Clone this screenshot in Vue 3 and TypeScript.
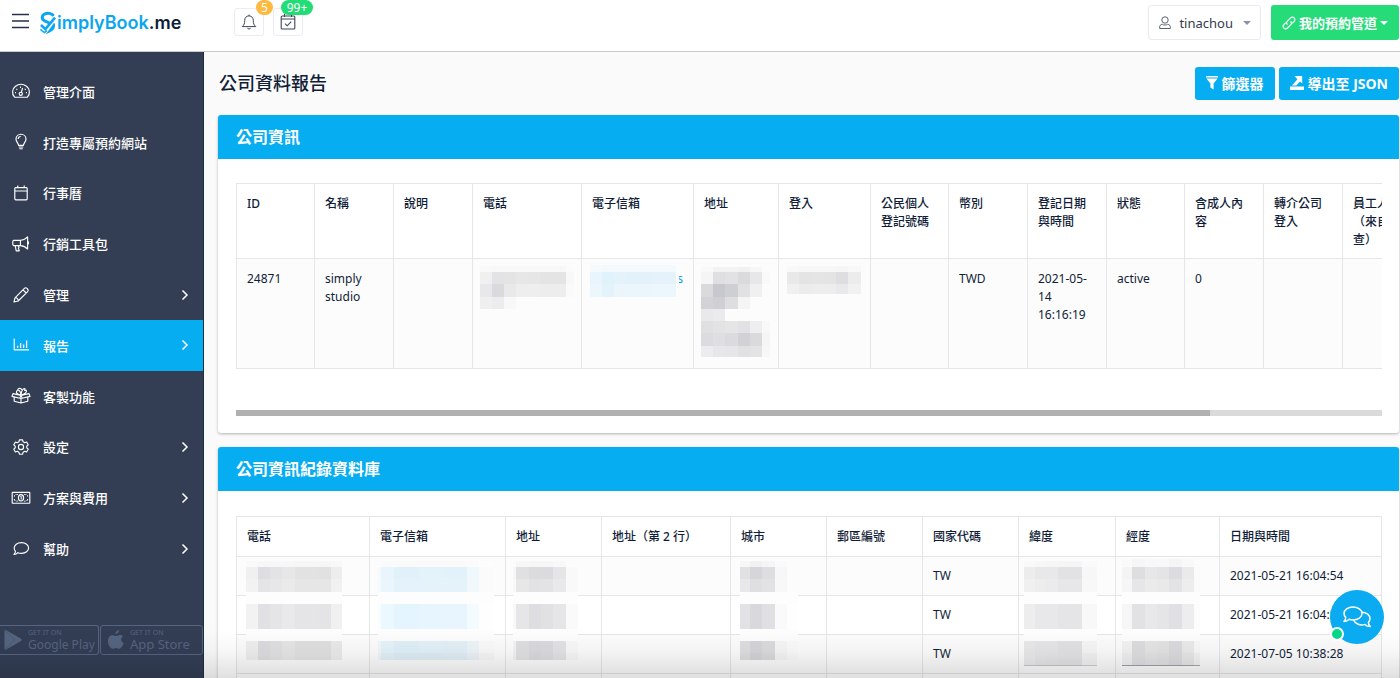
<script setup lang="ts">
import { computed, ref } from 'vue'

interface Mosaic {
  xs: number[]
  ys: number[]
  fills: string[]
}
interface Rect {
  x: number
  y: number
  w: number
  h: number
  fill: string
}
interface MenuItem {
  label: string
  icon: string
  more?: boolean
}

const menu: MenuItem[] = [
  { label: '管理介面', icon: 'gauge' },
  { label: '打造專屬預約網站', icon: 'bulb' },
  { label: '行事曆', icon: 'calendar' },
  { label: '行銷工具包', icon: 'horn' },
  { label: '管理', icon: 'pencil', more: true },
  { label: '報告', icon: 'chart', more: true },
  { label: '客製功能', icon: 'gift' },
  { label: '設定', icon: 'gear', more: true },
  { label: '方案與費用', icon: 'cash', more: true },
  { label: '幫助', icon: 'bubble', more: true },
]
const active = ref('報告')

const companyCols = [78, 79, 79, 109, 112, 85, 92, 78, 79, 79, 78, 79, 79, 79]
const companyHeads = ['ID', '名稱', '說明', '電話', '電子信箱', '地址', '登入', '公民個人登記號碼', '幣別', '登記日期與時間', '狀態', '含成人內容', '轉介公司登入', '員工人數（來自調查）']
const companyRow = ['24871', 'simply studio', '', '', '', '', '', '', 'TWD', '2021-05-14 16:16:19', 'active', '0', '', '']
const companyWidth = computed(() => companyCols.reduce((a, b) => a + b, 0))

const logCols = [133, 136, 96, 129, 96, 96, 96, 97, 104, 162]
const logHeads = ['電話', '電子信箱', '地址', '地址（第 2 行）', '城市', '郵區編號', '國家代碼', '緯度', '經度', '日期與時間']
const logRows = ['2021-05-21 16:04:54', '2021-05-21 16:04:54', '2021-07-05 10:38:28', '']

function rects(m: Mosaic): Rect[] {
  const out: Rect[] = []
  m.fills.forEach((line, r) => {
    line.split(' ').forEach((code, c) => {
      const fill = '#' + (code.length === 2 ? code + code + code : code)
      out.push({ x: m.xs[c], y: m.ys[r], w: m.xs[c + 1] - m.xs[c], h: m.ys[r + 1] - m.ys[r], fill })
    })
  })
  return out
}

// Pixelated covers for private values, keyed by column index; units are pixels from the cell corner.
const companyMasks: Record<number, Rect[]> = {
  3: rects({
    xs: [8, 20, 32, 44, 56, 68, 94, 102],
    ys: [8, 14, 26, 39, 51],
    fills: ['f9 f8 f8 f8 f8 f8 fb', 'f0f0f1 e3e3e5 e4 e7e7e8 e6 e4 f8', 'e8e8ea dadade e9 ee ee ed fa', 'efeff0 ececee f8'],
  }),
  4: rects({
    xs: [9, 21, 33, 45, 70, 95],
    ys: [7, 14, 26, 39],
    fills: ['f5fafd f3f9fc f3f9fc f3f9fc f3f9fc', 'e8f5fc e0f2fb e4f3fa e3f2fa e5f2fb', 'ebf6fd e4f2fc ecf5fc eaf5fc ecf6fd'],
  }),
  5: rects({
    xs: [8, 20, 32, 45, 57, 69, 77],
    ys: [9, 14, 26, 39, 51, 63, 75, 88, 99],
    fills: [
      'f9 f3 f3 f1 f7',
      'f5 dfdfe2 e2e2e4 dadadd e7e7e9 f9',
      'dadadd c7c7cd cecfd3 e1e1e4 f0f0f1',
      'd3d3d7 cfcfd4 dedee1 f5',
      'e9e9ec ebebed fc fc fc fc',
      'e0e0e3 e3e3e5 e5 e2e2e4 eeeef0 f8',
      'dcdce0 dfdfe2 dbdbdf d1d1d6 dadadd f5',
      'ececee e7e7e9 e6e6e8 e1e1e4 e3e3e5 f7',
    ],
  }),
  6: rects({
    xs: [9, 21, 33, 46, 58, 70, 83],
    ys: [8, 14, 26, 36],
    fills: ['f9 f7 f7 f7 f6 f8', 'e9e9ea e4e4e5 e5 e4 dedee0 ececed', 'f0 ececed ed ed e9e9eb f1'],
  }),
}

const bandYs = [6, 12, 24, 37, 49, 74, 86, 98, 105]
const logMasks: Record<number, Rect[]> = {
  0: rects({
    xs: [10, 22, 34, 46, 59, 83, 95, 106],
    ys: bandYs,
    fills: [
      'f9 f7 f7 f7 f6 f6 f8',
      'f0 dedee2 e3e3e5 e7 e2 e1 ed',
      'f2 e4e4e7 e7e7e9 ea e6 e6 f1',
      'fd fd fd fd fd fd fd',
      'f2f2f3 e0e0e5 e5e5e8 e9e9ec e5e5e7 e4e4e6 f0',
      'fd fd fd fd fd fd fd',
      'ee dcdce0 e0e0e2 e5 e0 e0 ea',
      'ee dedee1 e2e2e4 e6 e2 e2 ec',
    ],
  }),
  1: rects({
    xs: [9, 12, 25, 50, 74, 98, 110, 125],
    ys: bandYs,
    fills: [
      'fc fa fa fa fa fb fd',
      'f5fafc e8f5fc e1f1fa e4f2fa e3f1fa eff8fc fb',
      'f5fafc eaf6fc e3f2fb e4f2fa e4f2fa f1f8fc fb',
      'fd fd fd fd fd fd fd',
      'fafdff ebf8ff e4f5ff e7f5ff e8f5fe f3fbff fe',
      'fd fd fd fd fd fd fd',
      'f2f7fa e5f3fa e0f0f9 e3f1f9 e3f0f8 eef5f8 fa',
      'f0f5f8 e3f0f8 deedf7 dfedf6 e1eef6 ebf1f5 f6',
    ],
  }),
  2: rects({
    xs: [8, 11, 24, 36, 48, 61, 73],
    ys: bandYs,
    fills: [
      'fb f7 f6 f6 f8 fc',
      'f6 e0e0e2 dbdbde dbdbdf e5e5e7 f9',
      'f8 e7e7e8 e2e2e4 e3e3e5 e9e9eb f9',
      'fd fd fd fd fd fd',
      'f8 e6e6e9 dedee2 e1e1e4 e6e6e9 fa',
      'fd fd fd fd fd fd',
      'f3 dfdfe1 dadade dbdbdf e3e3e5 f8',
      'f3 e1e1e3 dadadd dcdcdf e2e2e4 f6',
    ],
  }),
  4: rects({
    xs: [10, 20, 32, 45, 57, 68],
    ys: bandYs,
    fills: [
      'f7 f1 f5 fa fc',
      'e1e1e4 d5d5da dedee1 f7 fc',
      'e8e8ea dfdfe2 e2e2e4 f8 fc',
      'fd fd fd fd fd',
      'e2e2e6 d8d8dd e0e0e4 fa fe',
      'fd fd fd fd fd',
      'dedee1 d6d6da dbdbde f6 fa',
      'dddddf d4d4d8 dadadd f4 f9',
    ],
  }),
  7: rects({
    xs: [6, 17, 28, 40, 64, 79],
    ys: [6, 12, 24, 37, 49, 74, 86, 98, 110, 111],
    fills: [
      'f9 f7 f6 f5 fa',
      'ececed e8e8ea e8e8ea e2e2e4 f7',
      'f0 ededee ebebed e7e7e9 f8',
      'fd fd fd fd fd',
      'ededee e8e8ea e8e8eb e5e5e8 f8',
      'fd fd fd fd fd',
      'e9e9ea e6e6e8 e6e6e8 e2e2e5 f6',
      'ea e6e6e8 e5e5e7 e3e3e5 f2',
      'c8c8cb c5c5c8 c5c5c8 c5c5c8 cd',
    ],
  }),
  8: rects({
    xs: [7, 17, 30, 42, 54, 67, 79, 85],
    ys: [4, 12, 24, 37, 49, 74, 86, 98, 110, 111],
    fills: [
      'fa f6 f8 f8 f5 f9 fc',
      'f4 dedee1 e7e7e8 e4e4e6 dcdce0 ea fb',
      'f6 e6e6e8 ebebec e9 e3e3e6 ed fb',
      'fd fd fd fd fd fd fd',
      'f6 e2e2e5 e8e8eb e5e5e8 e0e0e4 ededef fc',
      'fd fd fd fd fd fd fd',
      'f2 dddde0 e5e5e6 e3e3e4 dbdbdf ea f8',
      'f0 dfdfe1 e3e3e5 e1e1e3 dcdcdf e7 f3',
      '9fa0a8 9fa0a8 9fa0a8 9fa0a8 9fa0a8 9fa0a8 a9',
    ],
  }),
}
</script>

<template>
  <div class="app">
    <header class="topbar">
      <button class="burger" type="button" aria-label="選單">
        <svg width="18" height="16" viewBox="0 0 18 16"><path d="M0 1.5h17M0 8h17M0 14.5h17" stroke="#26314a" stroke-width="1.4" /></svg>
      </button>
      <a class="logo" href="#">
        <svg width="17" height="24" viewBox="0 0 17 24" fill="none" stroke="#0aa6f0">
          <path d="M13.6 4.8C11.6 2.2 7.6 1.5 4.6 3C1.4 4.8 1.4 8.4 4.6 9.8L9.4 12" stroke-width="3" />
          <path d="M15 6.6L5.4 18.2L1 14" stroke-width="2.6" />
          <path d="M13.8 12.4C15 16 12.8 19.4 8.4 21.2L13.6 14" stroke-width="1.8" />
          <path d="M.4 18.4L4.4 21.6L7 19.6" stroke-width="1.4" />
        </svg>
        <span class="logo-text">implyBook<b>.me</b></span>
      </a>
      <div class="notices">
        <button class="notice" type="button" aria-label="通知">
          <svg width="16" height="16" viewBox="0 0 16 16" fill="none" stroke="#3e465a" stroke-width="1"><path d="M8 1.9V.6M8 1.9C5.3 1.9 3.7 3.8 3.7 6.5C3.7 9.6 3.2 10.8 1.2 12.6H14.8C12.8 10.8 12.3 9.6 12.3 6.5C12.3 3.8 10.7 1.9 8 1.9ZM6.4 14.2Q8 16 9.6 14.2" /></svg>
          <span class="badge amber">5</span>
        </button>
        <button class="notice" type="button" aria-label="預約">
          <svg width="16" height="16" viewBox="0 0 16 16" fill="none" stroke="#3e465a" stroke-width="1.1"><rect x="1.2" y="2" width="13.6" height="13" rx="1" /><path d="M1.2 5H14.8M4.5 0V3M11.5 0V3M5 9.7L7.2 11.8L11.2 7.7" /></svg>
          <span class="badge green">99+</span>
        </button>
      </div>
      <button class="user" type="button">
        <svg width="14" height="16" viewBox="0 0 14 16" fill="none" stroke="#596174" stroke-width="1"><circle cx="7" cy="5" r="3.2" /><path d="M1.7 13.5C1.2 10.6 2.7 9.3 4.4 9.3C6 10.3 8 10.3 9.6 9.3C11.3 9.3 12.8 10.6 12.3 13.5Z" /></svg>
        <span>tinachou</span>
        <i class="caret"></i>
      </button>
      <button class="channels" type="button">
        <svg width="14" height="14" viewBox="0 0 14 14" fill="none" stroke="#fff" stroke-width="1.2"><path d="M5.4 8.6C4.4 7.5 4.4 6.2 5.4 5.2L8.5 2C9.6 .9 11.1 .9 12.1 1.9C13.1 2.9 13.1 4.4 12 5.5L10.2 7.3" /><path d="M8.6 5.4C9.6 6.5 9.6 7.8 8.6 8.8L5.5 12C4.4 13.1 2.9 13.1 1.9 12.1C.9 11.1 .9 9.6 2 8.5L3.8 6.7" /></svg>
        <span>我的預約管道</span>
        <i class="caret"></i>
      </button>
    </header>

    <div class="body">
      <aside class="sidebar">
        <nav class="menu">
          <a v-for="m in menu" :key="m.label" href="#" class="item" :class="{ on: m.label === active }" @click.prevent="active = m.label">
            <svg class="ico" width="20" height="20" viewBox="0 0 20 20" fill="none" stroke="currentColor" stroke-width="1.15" stroke-linejoin="round">
              <g v-if="m.icon === 'gauge'">
                <path d="M3.6 16.2C.4 12.7 1.2 7.6 4.5 5.2C7.8 2.9 12.2 2.9 15.5 5.2C18.8 7.6 19.6 12.7 16.4 16.2Z" />
                <circle cx="9.8" cy="12.8" r="1.6" /><path d="M10.4 11.2L11.6 7" />
                <path d="M4 11.6h1M5.5 8l.8.6M9 6.2h1M14.6 8l-.8.6M15 11.6h1" stroke-width="1.4" />
              </g>
              <g v-else-if="m.icon === 'bulb'">
                <path d="M7.6 13.4C7.5 11 5 10 5 7C5 4.2 7.2 2.2 10 2.2C12.8 2.2 15 4.2 15 7C15 10 12.5 11 12.4 13.4ZM7.8 15H12.2M8.2 16.7H11.8M7.2 7C7.2 5.5 8.2 4.6 9.7 4.5" />
              </g>
              <g v-else-if="m.icon === 'calendar'">
                <rect x="3.8" y="4.6" width="12.4" height="12.2" rx="1" /><path d="M3.8 8H16.2M6.8 2.6V5M13.2 2.6V5" />
              </g>
              <g v-else-if="m.icon === 'horn'">
                <path d="M9.4 6.3H2.6L1.8 7.2V10.6L2.6 11.6H9.4ZM9.4 6.3C12.5 6.1 15 4.7 16.6 2.9V15C15 13.2 12.5 11.8 9.4 11.6M16.6 7.3Q18.6 8.9 16.6 10.6M4.2 11.6L5.2 16.8H8.2L7.4 14.4L8 13.6L7.2 11.6" />
              </g>
              <g v-else-if="m.icon === 'pencil'">
                <path d="M3 17L4 12.8L13.4 3.4C14.2 2.6 15.2 2.6 16 3.4L16.6 4C17.4 4.8 17.4 5.8 16.6 6.6L7.2 16ZM12 4.8L15.2 8M4 12.8C5.8 12.4 7.6 14.2 7.2 16" />
              </g>
              <g v-else-if="m.icon === 'chart'">
                <path d="M3.2 3.6V14.8H18" /><path d="M6.6 13V10.8M9.6 13V8M12.6 13V9.4M15.6 13V5.4" stroke-width="1.3" />
              </g>
              <g v-else-if="m.icon === 'gift'">
                <path d="M2 7.6L10 9.4L18 7.6L19 10.4L11.2 12.2L10 9.4L8.8 12.2L1 10.4ZM3.2 11.2V15.2L10 17L16.8 15.2V11.2M10 12V17M10 9C7 8.6 4.8 7.4 5.6 5.2C6.6 3.2 9.6 4.2 10 9ZM10 9C10.4 4.6 12 2 14 2.8L13.6 4.4L15.4 4.4C16 6.6 13.4 8.4 10 9ZM6.6 3.8C7.4 1.8 10 1.8 10.8 4" />
              </g>
              <g v-else-if="m.icon === 'gear'">
                <path d="M8.4 2.8H11.6L12.1 4.8L13.7 5.7L15.6 5L17.2 7.8L15.8 9.1V10.9L17.2 12.2L15.6 15L13.7 14.3L12.1 15.2L11.6 17.2H8.4L7.9 15.2L6.3 14.3L4.4 15L2.8 12.2L4.2 10.9V9.1L2.8 7.8L4.4 5L6.3 5.7L7.9 4.8Z" /><circle cx="10" cy="10" r="2.6" />
              </g>
              <g v-else-if="m.icon === 'cash'">
                <rect x="1.2" y="4.4" width="17.6" height="10.8" rx=".5" /><path d="M5.4 6.5H6.8M13.2 6.5H14.6M5.4 13.1H6.8M13.2 13.1H14.6M3.4 8.6V7.6L4.4 6.6M16.6 8.6V7.6L15.6 6.6M3.4 11V12L4.4 13M16.6 11V12L15.6 13" stroke-width="1" /><ellipse cx="10" cy="9.8" rx="2.6" ry="3.2" /><path d="M9.4 8.6L10.2 8.2V11.6" stroke-width="1" />
              </g>
              <g v-else>
                <path d="M10.4 3.6C14.6 3.6 17.6 6 17.6 9C17.6 12 14.6 14.4 10.6 14.4C9.2 14.4 8 14.2 6.9 13.7C5.8 14.9 4.6 15.4 3 15.4C3.9 14.4 4.4 13.4 4.4 12.2C3.6 11.3 3.2 10.2 3.2 9C3.2 6 6.2 3.6 10.4 3.6Z" />
              </g>
            </svg>
            <span>{{ m.label }}</span>
            <svg v-if="m.more" class="more" width="8" height="12" viewBox="0 0 8 12" fill="none" stroke="currentColor" stroke-width="1.5"><path d="M1.5 1.5L6 6L1.5 10.5" /></svg>
          </a>
        </nav>
        <div class="stores">
          <a class="store play" href="#">
            <svg width="20" height="22" viewBox="0 0 20 22"><path d="M1.5 2.2C1.5 1 2.4.7 3.2 1.2L18 9.8C19 10.4 19 11.4 18 12L3.2 20.6C2.4 21.1 1.5 20.8 1.5 19.6Z" fill="#56657f" /><path d="M2 1.5L11.8 11L2 20.5" fill="none" stroke="#46546c" stroke-width=".8" /></svg>
            <span class="caption"><small>GET IT ON</small><span>Google Play</span></span>
          </a>
          <a class="store apple" href="#">
            <svg width="18" height="22" viewBox="0 0 18 22" fill="#56657f"><path d="M12.1 1C12.2 3.2 10.3 5 8.5 4.9C8.3 3 10.2 1.1 12.1 1ZM15.9 7.4C13.3 9 13.7 12.8 16.7 14C15.9 16.6 14 19.6 12.2 19.7C10.9 19.7 10.5 18.9 8.9 18.9C7.3 18.9 6.8 19.7 5.6 19.7C3.4 19.7.9 15.6.9 12C.9 8.5 3.1 6.2 5.5 6.2C7 6.2 7.9 7.1 9 7.1C10 7.1 11.2 6 13 6C14 6 15.2 6.5 15.9 7.4Z" /></svg>
            <span class="caption"><small>GET IT ON</small><span>App Store</span></span>
          </a>
        </div>
      </aside>

      <main class="main">
        <div class="head">
          <h1>公司資料報告</h1>
          <button class="act" type="button">
            <svg width="12" height="14" viewBox="0 0 12 14" fill="#fff"><path d="M0 0H12V1.6H0ZM.4 2.6H11.6L7.6 7.4V13.4L4.4 11.6V7.4Z" /></svg>
            <span>篩選器</span>
          </button>
          <button class="act" type="button">
            <svg width="14" height="14" viewBox="0 0 14 14" fill="#fff"><path d="M0 10.6H14V14H0ZM4.4 0H12.2V7.4L10 5.4L6.4 9.6H2L7.4 3.2Z" /></svg>
            <span>導出至 JSON</span>
          </button>
        </div>

        <section class="panel">
          <h2>公司資訊</h2>
          <div class="content">
            <div class="scroller">
              <table class="grid company" :style="{ width: companyWidth + 'px' }">
                <colgroup><col v-for="(w, i) in companyCols" :key="i" :style="{ width: w + 'px' }" /></colgroup>
                <thead><tr><th v-for="h in companyHeads" :key="h" scope="col">{{ h }}</th></tr></thead>
                <tbody>
                  <tr>
                    <td v-for="(c, i) in companyRow" :key="i">
                      {{ c }}
                      <svg v-if="companyMasks[i]" class="mask" width="1" height="1" shape-rendering="crispEdges" aria-hidden="true">
                        <rect v-for="(r, k) in companyMasks[i]" :key="k" :x="r.x" :y="r.y" :width="r.w" :height="r.h" :fill="r.fill" />
                      </svg>
                      <a v-if="i === 4" class="tail" href="#">s</a>
                    </td>
                  </tr>
                </tbody>
              </table>
            </div>
            <div class="track"><div class="thumb"></div></div>
          </div>
        </section>

        <section class="panel">
          <h2>公司資訊紀錄資料庫</h2>
          <div class="content">
            <table class="grid log">
              <colgroup><col v-for="(w, i) in logCols" :key="i" :style="{ width: w + 'px' }" /></colgroup>
              <thead><tr><th v-for="h in logHeads" :key="h" scope="col">{{ h }}</th></tr></thead>
              <tbody>
                <tr v-for="(date, n) in logRows" :key="n">
                  <td v-for="(h, i) in logHeads" :key="h">
                    <template v-if="i === 6 && date">TW</template>
                    <template v-else-if="i === 9">{{ date }}</template>
                    <svg v-else-if="n === 0 && logMasks[i]" class="mask" width="1" height="1" shape-rendering="crispEdges" aria-hidden="true">
                      <rect v-for="(r, k) in logMasks[i]" :key="k" :x="r.x" :y="r.y" :width="r.w" :height="r.h" :fill="r.fill" />
                    </svg>
                  </td>
                </tr>
              </tbody>
            </table>
          </div>
        </section>
      </main>
    </div>

    <div class="shade"></div>
    <button class="chat" type="button" aria-label="線上客服">
      <svg width="28" height="22" viewBox="0 0 28 22" fill="none" stroke="#fff" stroke-width="1.5" stroke-linejoin="round">
        <path d="M10 1C15 1 19 3.8 19 7.5C19 11.2 15 14 10 14C8.6 14 7.3 13.8 6.1 13.3C4.9 14.6 3.2 15.4 1 15.4C2.2 14.2 2.8 12.8 2.7 11.4C1.6 10.3 1 9 1 7.5C1 3.8 5 1 10 1Z" />
        <path d="M18.8 6.2C23.4 6.2 27 9 27 12.5C27 14 26.4 15.3 25.4 16.3C25.3 17.8 26 19.2 27.2 20.6C25 20.5 23.2 19.7 22 18.4C17.3 20 12.2 18 10.6 14" />
      </svg>
      <span class="online"></span>
    </button>
  </div>
</template>

<style>
html, body { margin: 0; background: #fafafa; }
</style>

<style scoped>
* { box-sizing: border-box; }
.app {
  display: flex; flex-direction: column; height: 100vh; overflow: hidden;
  font-family: "Noto Sans", "Noto Sans CJK TC", sans-serif; font-size: 12px; color: #111d38;
}
button { font: inherit; cursor: pointer; padding: 0; border: 0; background: none; color: inherit; }
a { text-decoration: none; color: inherit; }
svg { display: block; flex: none; }

.topbar { display: flex; align-items: flex-start; height: 52px; flex: none; background: #fff; border-bottom: 1px solid #cbcbcb; padding: 5px 1px 0 12px; }
.burger { margin-top: 8px; width: 18px; height: 16px; }
.logo { display: flex; align-items: flex-start; margin: 6px 0 0 10px; width: 142px; }
.logo-text { font: 600 18px/24px Inter, sans-serif; color: #0aa6f0; white-space: nowrap; }
.logo-text b { font-weight: 600; color: #0d1c38; }
.notices { display: flex; gap: 9px; margin: 3px auto 0 52px; }
.notice { position: relative; width: 30px; height: 28px; border: 1px solid #ebebf4; border-radius: 3px; display: flex; align-items: center; justify-content: center; }
.badge { position: absolute; top: -9px; height: 15px; border-radius: 8px; color: #fff; font-size: 12px; line-height: 15px; text-align: center; }
.amber { left: 21px; width: 17px; background: #ffb93f; }
.green { left: 7px; width: 32px; background: #22dc75; }
.user { display: flex; align-items: center; height: 35px; border: 1px solid #e9e9f3; border-radius: 3px; padding: 0 9px; font-size: 13px; color: #333b4d; }
.user span { margin: 0 10px 0 7px; }
.caret { border: 4px solid transparent; border-top-color: currentColor; border-bottom: 0; }
.user .caret { color: #8a92ad; }
.channels { display: flex; align-items: center; gap: 3px; height: 35px; margin-left: 10px; padding: 0 11px; border-radius: 3px; background: #25dc79; color: #fff; font-size: 13px; font-weight: 700; }

.body { display: flex; flex: 1; min-height: 0; }
.sidebar { display: flex; flex-direction: column; width: 204px; flex: none; background: #333e55; border-right: 1px solid #1f2c45; color: #fff; padding-top: 14px; }
.menu { display: grid; grid-template-rows: repeat(10, 1fr); height: 508px; flex: none; }
.item { display: flex; align-items: center; padding: 0 14px 0 11px; font-size: 13px; font-weight: 500; }
.item span { margin-left: 12px; }
.item .more { margin-left: auto; }
.item.on { background: #06adf0; }
.stores { display: flex; gap: 1px; margin: auto 0 23px; }
.store { display: flex; align-items: center; gap: 5px; height: 30px; border: 1px solid #56657f; border-radius: 3px; color: #56657f; flex: 1; white-space: nowrap; }
.caption { display: grid; font-size: 13px; line-height: 15px; }
.caption small { font-size: 7px; line-height: 8px; }
.play { border-left: 0; padding-left: 3px; border-radius: 0 3px 3px 0; }
.play .caption { font-size: 12px; }
.apple { padding-left: 6px; }

.main { flex: 1; min-width: 0; overflow: hidden; padding: 15px 1px 0 14px; background: #fafafa; }
.head { display: flex; align-items: center; gap: 4px; margin-bottom: 15px; }
h1 { margin: 0 auto 0 1px; font-size: 18px; font-weight: 500; line-height: 33px; }
.act { display: flex; align-items: center; gap: 4px; height: 33px; padding: 0 11px 2px; border-radius: 3px; background: #06adf0; color: #fff; font-size: 14px; font-weight: 700; }
.panel { margin-bottom: 14px; background: #fff; border-radius: 3px; box-shadow: 0 1px 3px rgba(0, 0, 0, .28); }
h2 { margin: 0; padding-left: 18px; border-radius: 3px 3px 0 0; background: #06adf0; color: #fff; font-size: 16px; font-weight: 700; line-height: 44px; height: 44px; }
.content { padding: 24px 17px 17px 18px; }
.scroller { overflow: hidden; padding-bottom: 41px; }
.track { height: 6px; background: #dadada; }
.thumb { width: 85%; height: 6px; background: #b0b0b0; }

.grid { border-collapse: collapse; table-layout: fixed; width: 100%; line-height: 18px; }
.grid th, .grid td { position: relative; border: 1px solid #e6e6e8; text-align: left; vertical-align: top; padding: 11px 10px 0; }
.grid th { font-weight: 500; background: #fff; }
.company th { height: 75px; }
.company td { height: 110px; }
.log { margin-top: 25px; }
.content:has(.log) { padding-top: 0; }
.log th { height: 40px; }
.log td { height: 39px; padding-top: 10px; }
.grid tbody tr:nth-child(odd) td { background: #fcfcfc; }
.mask { position: absolute; left: -1px; top: -1px; overflow: visible; z-index: 1; pointer-events: none; }
.log .mask { top: -2px; }
.tail { position: absolute; left: 97px; top: 11px; width: 4px; overflow: hidden; direction: rtl; color: #06a0ea; }

.shade { position: fixed; left: 0; right: 0; bottom: 0; height: 48px; pointer-events: none; background: linear-gradient(to bottom, transparent, rgba(0, 0, 0, .03) 45%, rgba(0, 0, 0, .12)); z-index: 2; }
.chat { position: fixed; right: 16px; bottom: 34px; width: 54px; height: 54px; border-radius: 50%; background: #0aabf0; display: flex; align-items: center; justify-content: center; z-index: 3; }
.online { position: absolute; left: 0; bottom: 3px; width: 14px; height: 14px; border: 2px solid #fff; border-radius: 50%; background: #05d78a; }
</style>
